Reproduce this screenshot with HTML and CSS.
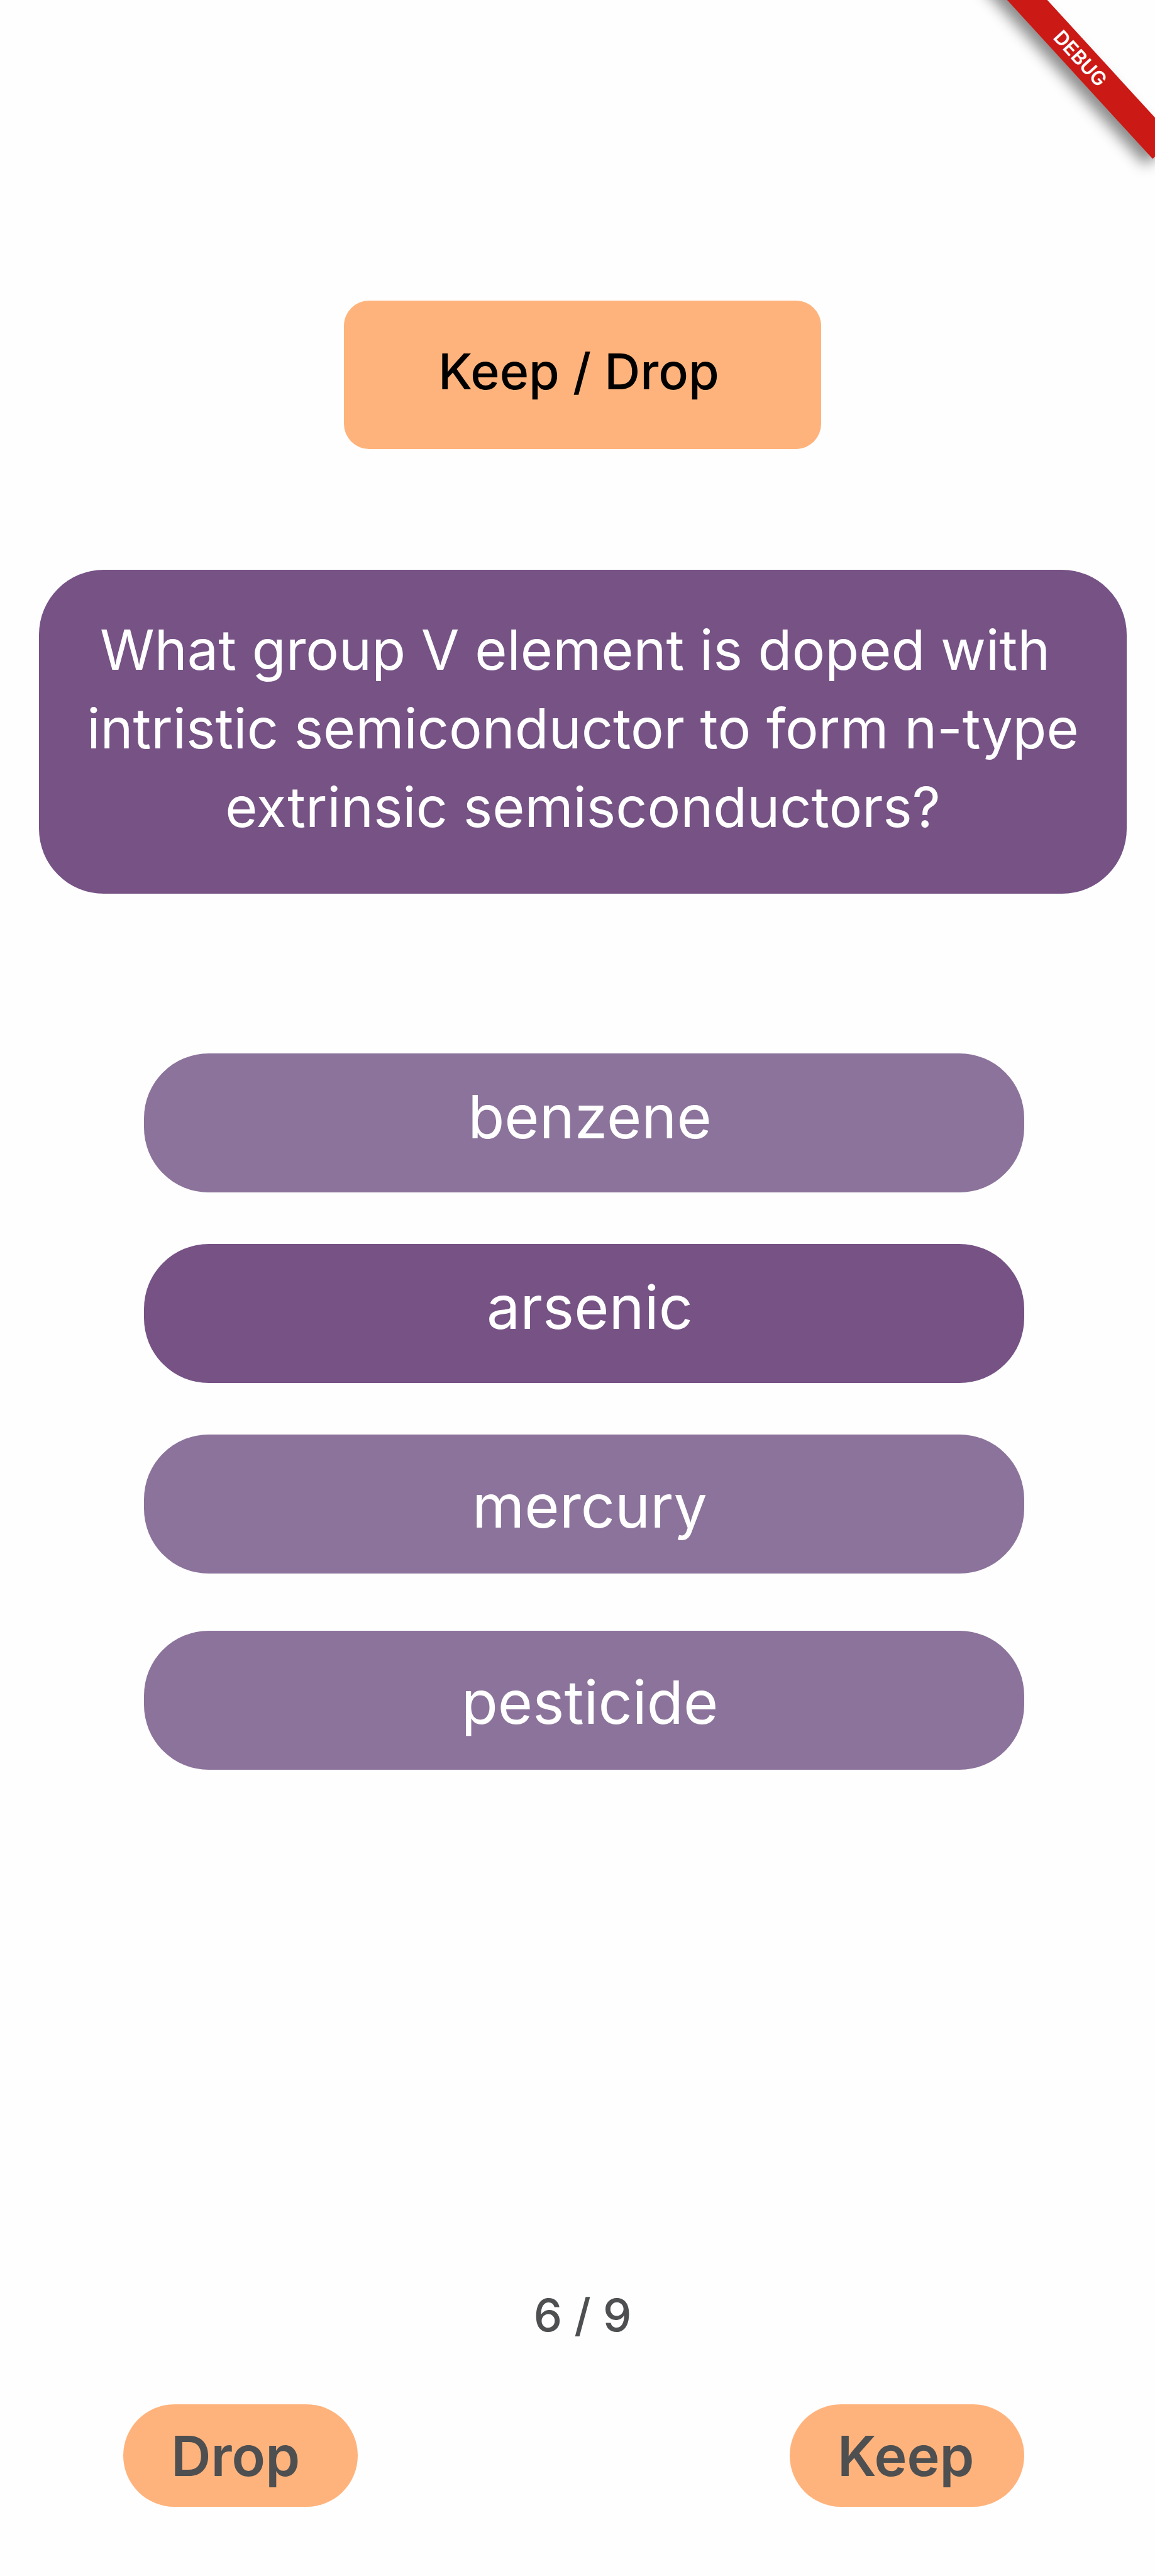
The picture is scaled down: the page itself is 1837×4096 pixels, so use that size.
FILE: index.html
```html
<!DOCTYPE html>
<html lang="en">
<head>
<meta charset="utf-8">
<meta name="viewport" content="width=device-width, initial-scale=1">
<title>Keep / Drop</title>
<link rel="stylesheet" href="styles.css">
</head>
<body>
<div class="corner" aria-hidden="true"><div class="banner">DEBUG</div></div>
<main class="screen">
  <h1 class="title">Keep / Drop</h1>
  <p class="question"><span class="line line--spaced">What group V element is doped with </span><span class="line">intristic semiconductor to form n-type</span><span class="line">extrinsic semisconductors?</span></p>
  <div class="options">
    <button class="option" type="button">benzene</button>
    <button class="option option--selected" type="button" aria-pressed="true">arsenic</button>
    <button class="option option--low" type="button">mercury</button>
    <button class="option option--low" type="button">pesticide</button>
  </div>
  <p class="counter">6 / 9</p>
  <div class="actions">
    <button class="action" type="button">Drop</button>
    <button class="action" type="button">Keep</button>
  </div>
</main>
</body>
</html>
```

FILE: styles.css
```css
* {
  box-sizing: border-box;
}

body {
  margin: 0;
  background: #fefefe;
  font-family: Inter, "Liberation Sans", sans-serif;
}

button {
  border: 0;
  font-family: inherit;
  cursor: pointer;
}

.screen {
  display: flex;
  flex-direction: column;
  min-height: 100vh;
  padding: 478px 0 110px;
}

.title {
  align-self: center;
  min-width: 759px;
  margin: 0 0 192px 16px;
  padding: 63px 152px 75px 140px;
  border-radius: 40px;
  background: #ffb37c;
  color: #000;
  font-size: 79px;
  font-weight: 500;
  line-height: 98px;
  text-align: center;
}

.question {
  margin: 0 45px 254px 62px;
  padding: 65px 0 75px;
  border-radius: 103px;
  background: #765285;
  color: #fff;
  font-size: 88px;
  line-height: 125px;
  text-align: center;
}

.line {
  display: block;
}

.line--spaced {
  white-space: pre-wrap;
}

.options {
  display: flex;
  flex-direction: column;
  margin: 0 208px 0 229px;
}

.option {
  padding: 42px 0 61px 18px;
  border-radius: 103px;
  background: #8c739b;
  color: #fff;
  font-size: 95px;
  line-height: 118px;
  text-align: center;
}

.option + .option {
  margin-top: 82px;
}

.option + .option:last-child {
  margin-top: 91px;
}

.option--selected {
  background: #765285;
}

.option--low {
  padding-top: 55px;
  padding-bottom: 48px;
}

.counter {
  margin: auto 0 98px 16px;
  color: #4e4f50;
  font-size: 72px;
  font-weight: 500;
  line-height: 88px;
  text-align: center;
}

.actions {
  display: flex;
  justify-content: space-between;
  margin: 0 208px 0 196px;
}

.action {
  width: 373px;
  padding: 29px 0 28px 76px;
  border-radius: 82px;
  background: #ffb37c;
  color: #4e4f50;
  font-size: 88px;
  font-weight: 600;
  line-height: 106px;
  text-align: left;
}

/* Ribbon across the top right corner */
.corner {
  position: absolute;
  top: 0;
  right: 0;
  width: 320px;
  height: 320px;
  overflow: hidden;
}

.banner {
  position: absolute;
  top: 69px;
  right: -77px;
  width: 391px;
  background: #cb1916;
  box-shadow: 0 16px 22px rgba(0, 0, 0, 0.45);
  color: #fff;
  font-size: 31px;
  font-weight: 600;
  line-height: 47px;
  text-align: center;
  transform: rotate(47.5deg);
}
```
